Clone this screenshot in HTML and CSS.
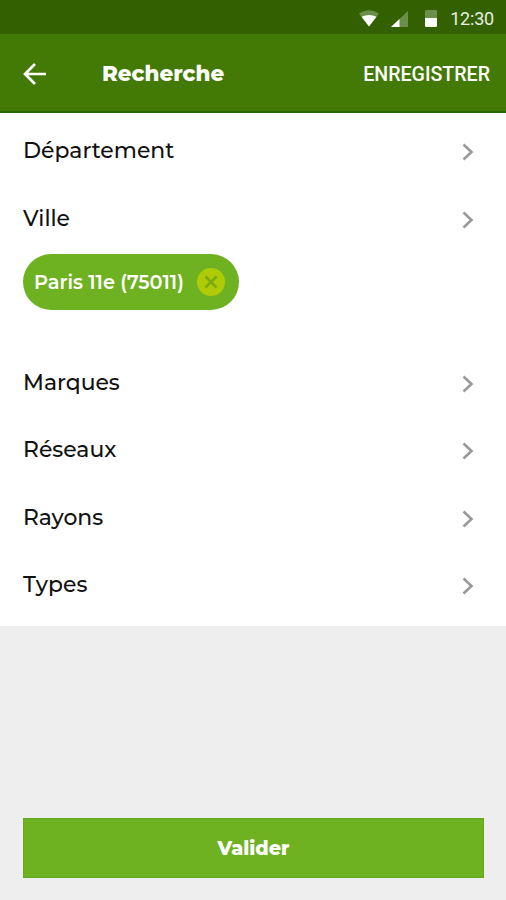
FILE: index.html
```html
<!DOCTYPE html>
<html lang="fr">
<head>
<meta charset="utf-8">
<title>Recherche</title>
<link rel="stylesheet" href="styles.css">
</head>
<body>
<div class="status">
  <svg class="wifi" width="20" height="17" viewBox="0 0 20 17"><path d="M0 3.5Q10-3 20 3.5L10 16.5Z" fill="#6b8e4c"/><path d="M2.5 6.8Q10 3 17.5 6.8L10 16.5Z" fill="#fff"/></svg>
  <svg class="signal" width="17" height="16" viewBox="0 0 17 16"><path d="M17 0V16H0Z" fill="#6b8e4c"/><path d="M8.5 8V16H0Z" fill="#fff"/></svg>
  <svg class="battery" width="12" height="17" viewBox="0 0 12 17"><path d="M1 0H11Q12 0 12 1V8H0V1Q0 0 1 0Z" fill="#6b8e4c"/><path d="M0 8H12V15.5Q12 17 10.5 17H1.5Q0 17 0 15.5Z" fill="#fff"/></svg>
  <span class="time">12:30</span>
</div>
<header class="bar">
  <svg class="back" width="24" height="24" viewBox="0 0 24 24"><path d="M12 2L2 12L12 22M2 12H23" fill="none" stroke="#fff" stroke-width="2.7"/></svg>
  <h1 class="title">Recherche</h1>
  <span class="save">ENREGISTRER</span>
</header>
<main class="list">
  <div class="row"><span class="label">Département</span><svg class="chev" width="12" height="18" viewBox="0 0 12 18"><path d="M1.5 1.5L9.5 9L1.5 16.5"/></svg></div>
  <div class="row"><span class="label">Ville</span><svg class="chev" width="12" height="18" viewBox="0 0 12 18"><path d="M1.5 1.5L9.5 9L1.5 16.5"/></svg></div>
  <div class="chips">
    <div class="chip"><span class="chip-text">Paris 11e (75011)</span><svg class="remove" width="28" height="28" viewBox="0 0 28 28"><circle cx="14" cy="14" r="14" fill="#aecb05"/><path d="M8.5 8.5L19.5 19.5M19.5 8.5L8.5 19.5" stroke="#7cab10" stroke-width="2.6"/></svg></div>
  </div>
  <div class="row"><span class="label">Marques</span><svg class="chev" width="12" height="18" viewBox="0 0 12 18"><path d="M1.5 1.5L9.5 9L1.5 16.5"/></svg></div>
  <div class="row"><span class="label">Réseaux</span><svg class="chev" width="12" height="18" viewBox="0 0 12 18"><path d="M1.5 1.5L9.5 9L1.5 16.5"/></svg></div>
  <div class="row"><span class="label">Rayons</span><svg class="chev" width="12" height="18" viewBox="0 0 12 18"><path d="M1.5 1.5L9.5 9L1.5 16.5"/></svg></div>
  <div class="row"><span class="label">Types</span><svg class="chev" width="12" height="18" viewBox="0 0 12 18"><path d="M1.5 1.5L9.5 9L1.5 16.5"/></svg></div>
</main>
<footer class="footer"><button class="submit">Valider</button></footer>
</body>
</html>
```
FILE: styles.css
```css
* { box-sizing: border-box; }
body {
  margin: 0;
  height: 900px;
  display: flex;
  flex-direction: column;
  background: #eeeeee;
  font-family: Montserrat, Inter, sans-serif;
  color: #111;
}
.status {
  height: 34px;
  flex: none;
  background: #336000;
  display: flex;
  align-items: center;
  justify-content: flex-end;
  padding: 3px 12px 0 0;
}
.wifi { margin-right: 12px; }
.signal { margin-right: 17px; }
.battery { margin-right: 13px; }
.time {
  font: 400 18px/20px Roboto, sans-serif;
  letter-spacing: -0.2px;
  color: #e8eee2;
}
.bar {
  height: 79px;
  flex: none;
  background: #437a05;
  border-bottom: 2px solid #286507;
  display: flex;
  align-items: center;
  padding: 3px 16px 0 23px;
  color: #fff;
}
.title {
  margin: 0 auto 0 55px;
  padding-bottom: 2px;
  font-size: 21.4px;
  font-weight: 800;
  line-height: 26px;
}
.save { font: 500 19.6px/24px Roboto, sans-serif; padding-top: 2px; }
.list {
  height: 513px;
  flex: none;
  background: #fff;
  padding: 5.5px 32px 0 23px;
}
.row {
  height: 67.5px;
  display: flex;
  align-items: center;
  justify-content: space-between;
}
.label {
  font-size: 21.9px;
  font-weight: 500;
  line-height: 26px;
  padding-bottom: 4.5px;
}
.chev path { fill: none; stroke: #999; stroke-width: 2.6; }
.chips { height: 96.5px; padding-top: 0.5px; }
.chip {
  width: 216px;
  height: 56px;
  border-radius: 28px;
  background: #6fb221;
  color: #fff;
  display: flex;
  align-items: center;
  justify-content: space-between;
  padding: 0 14px 0 11px;
}
.chip-text {
  font-size: 19.3px;
  font-weight: 600;
  white-space: nowrap;
}
.footer { margin-top: auto; padding: 0 22px 22px 23px; display: flex; }
.submit {
  flex: 1;
  height: 60px;
  border: 1px solid #62aa18;
  background: #6fb221;
  color: #fff;
  font: 800 19.2px/24px Montserrat, Inter, sans-serif;
  padding: 0;
}
```
